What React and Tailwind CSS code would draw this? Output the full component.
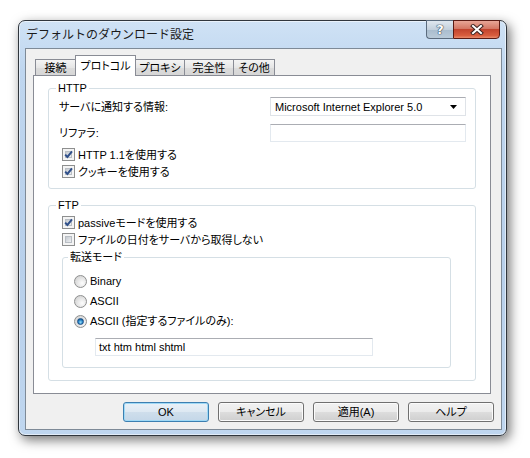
import React from "react";

const ui =
  "font-['Liberation_Sans','Noto_Sans_CJK_JP',sans-serif] [font-feature-settings:'palt'] text-[11px] text-black";

function Check({ checked }) {
  return (
    <span className="relative w-[13px] h-[13px] shrink-0 border border-[#8e8f8f] bg-[#f4f4f4]">
      <span className="absolute inset-[2px] border border-[#b9bec4] bg-[linear-gradient(135deg,#c4c9cf,#eef0f2)]" />
      {checked && (
        <svg className="absolute inset-0" width="11" height="11" viewBox="0 0 11 11">
          <path
            d="M2.2 5.6 L4.4 8 L9 2.4"
            stroke="#2f4f8a"
            strokeWidth="2"
            fill="none"
          />
        </svg>
      )}
    </span>
  );
}

function CheckRow({ checked, children, className = "" }) {
  return (
    <div className={`h-[17px] flex items-center pl-[13px] gap-[3px] ${className}`}>
      <Check checked={checked} />
      <span className="leading-[14px]">{children}</span>
    </div>
  );
}

function Radio({ checked }) {
  return (
    <span className="relative w-[13px] h-[13px] shrink-0 rounded-full border border-[#8e8f8f] bg-[radial-gradient(circle_at_65%_65%,#fdfdfd,#d4d4d4_80%)]">
      {checked && (
        <span className="absolute inset-[2px] rounded-full border border-[#1d4f86] bg-[radial-gradient(circle_at_50%_65%,#9be0fb,#1f7dc2_55%,#0b3d6e)]" />
      )}
    </span>
  );
}

function RadioRow({ checked, children }) {
  return (
    <div className="h-[20px] flex items-center pl-[11px] gap-[3px]">
      <Radio checked={checked} />
      <span className="leading-[14px]">{children}</span>
    </div>
  );
}

function Btn({ children, primary }) {
  return (
    <div
      className={
        primary
          ? "w-[86px] h-[20px] rounded-[3px] border border-[#3c7fb1] bg-[linear-gradient(#e9f1f8_0%,#dde8f2_50%,#cfdeec_50%,#c4d7e8_100%)] shadow-[inset_0_0_0_1px_#9fd9f6] flex items-center justify-center leading-[14px]"
          : "w-[86px] h-[20px] rounded-[3px] border border-[#707070] bg-[linear-gradient(#f2f2f2_0%,#ebebeb_50%,#dddddd_50%,#cfcfcf_100%)] shadow-[inset_0_0_0_1px_#fbfbfb] flex items-center justify-center leading-[14px]"
      }
    >
      {children}
    </div>
  );
}

function Tab({ children, active, width }) {
  if (active) {
    return (
      <div
        className={`${width} h-[21px] -mb-[1px] -ml-[1px] relative z-10 bg-white border border-b-0 border-[#898c95] flex items-start justify-center pt-[3px] leading-[14px]`}
      >
        {children}
      </div>
    );
  }
  return (
    <div
      className={`${width} h-[16px] -ml-[1px] first:ml-0 border border-b-0 border-[#898c95] bg-[linear-gradient(#f4f4f4,#e6e6e6_50%,#dcdcdc_51%,#d6d6d6)] flex items-center justify-center leading-[14px]`}
    >
      {children}
    </div>
  );
}

export default function App() {
  return (
    <div className={`w-[530px] h-[458px] bg-white pt-[20px] pl-[18px] ${ui}`}>
      {/* window frame */}
      <div className="w-[489px] h-[416px] rounded-[7px] border border-[#30363d] bg-[linear-gradient(180deg,#cfe2f5,#bfd6ef_12%,#b8d0eb_60%,#bfd6ef)] shadow-[3px_4px_12px_rgba(0,0,0,0.55),inset_0_0_0_1px_rgba(255,255,255,0.55)] flex flex-col">
        {/* title bar */}
        <div className="h-[27px] flex items-start justify-between">
          <div className="pl-[7px] pt-[6px] font-['Noto_Sans_CJK_JP',sans-serif] [font-feature-settings:normal] leading-[14px] text-[12px] text-[#1a1a1a]">
            デフォルトのダウンロード設定
          </div>
          <div className="flex -mt-[1px] mr-[6px]">
            <div className="w-[27px] h-[19px] rounded-bl-[4px] border border-[#5b6b7d] border-r-0 bg-[linear-gradient(#dfe7ef,#c3d0dc_50%,#a9bccd_51%,#b9cad9)] flex items-center justify-center">
              <span className="text-[13px] leading-none font-bold text-white [text-shadow:0_0_1px_#2c3e50,0_0_1px_#2c3e50,0_0_1px_#2c3e50] font-['DejaVu_Sans',sans-serif]">
                ?
              </span>
            </div>
            <div className="w-[47px] h-[19px] rounded-br-[4px] border border-[#5a1b14] bg-[linear-gradient(#e8a697,#d47764_45%,#c2442e_50%,#d85d3e_85%,#e98b6c)] flex items-center justify-center">
              <svg width="14" height="11" viewBox="0 0 14 11">
                <path d="M3 2 L11 9 M11 2 L3 9" stroke="#3d2320" strokeWidth="4" strokeLinecap="square" />
                <path d="M3 2 L11 9 M11 2 L3 9" stroke="#ffffff" strokeWidth="2" strokeLinecap="square" />
              </svg>
            </div>
          </div>
        </div>

        {/* client area */}
        <div className="ml-[6px] w-[477px] h-[382px] border border-[#7e8a97] bg-[#f0f0f0] pt-[6px] pl-[7px] pr-[10px] flex flex-col">
          {/* tabs */}
          <div className="h-[20px] flex items-end ml-[2px]">
            <Tab width="w-[41px]">接続</Tab>
            <Tab width="w-[61px]" active>
              プロトコル
            </Tab>
            <Tab width="w-[50px]">プロキシ</Tab>
            <Tab width="w-[50px]">完全性</Tab>
            <Tab width="w-[42px]">その他</Tab>
          </div>

          {/* tab panel */}
          <div className="h-[319px] w-[458px] border border-[#898c95] bg-white pl-[14px] flex flex-col">
            <fieldset className="mt-[5px] w-[428px] border border-[#d5dfe5] rounded-[3px] pb-[8px]">
              <legend className="ml-[7px] px-[2px] leading-[14px]">HTTP</legend>
              <div className="mt-[2px] h-[19px] flex items-center">
                <span className="pl-[10px] w-[221px] leading-[14px]">サーバに通知する情報:</span>
                <div className="w-[196px] h-[19px] border border-[#dfe3e8] border-t-[#abadb3] flex items-center justify-between pl-[4px] pr-[8px]">
                  <span className="leading-[14px]">Microsoft Internet Explorer 5.0</span>
                  <svg width="7" height="4" viewBox="0 0 7 4">
                    <path d="M0 0 H7 L3.5 4 Z" fill="#000" />
                  </svg>
                </div>
              </div>
              <div className="mt-[8px] h-[18px] flex items-center">
                <span className="pl-[10px] w-[221px] leading-[14px]">リファラ:</span>
                <div className="w-[196px] h-[18px] border border-[#e3e9ef] border-t-[#abadb3] bg-white" />
              </div>
              <CheckRow checked className="mt-[4px]">
                HTTP 1.1を使用する
              </CheckRow>
              <CheckRow checked>クッキーを使用する</CheckRow>
            </fieldset>

            <fieldset className="mt-[9px] w-[428px] border border-[#d5dfe5] rounded-[3px] pb-[12px]">
              <legend className="ml-[7px] px-[2px] leading-[14px]">FTP</legend>
              <CheckRow checked className="mt-[2px]">
                passiveモードを使用する
              </CheckRow>
              <CheckRow>ファイルの日付をサーバから取得しない</CheckRow>

              <fieldset className="mt-[2px] ml-[13px] w-[389px] border border-[#d5dfe5] rounded-[3px] pb-[11px]">
                <legend className="ml-[5px] px-[2px] leading-[14px]">転送モード</legend>
                <div className="mt-[7px]">
                  <RadioRow>Binary</RadioRow>
                  <RadioRow>ASCII</RadioRow>
                  <RadioRow checked>ASCII (指定するファイルのみ):</RadioRow>
                </div>
                <div className="mt-[7px] ml-[32px] w-[278px] h-[18px] border border-[#e3e9ef] border-t-[#abadb3] bg-white flex items-center pl-[3px]">
                  <span className="leading-[14px]">txt htm html shtml</span>
                </div>
              </fieldset>
            </fieldset>
          </div>

          {/* buttons */}
          <div className="mt-[8px] -mr-[3px] flex justify-end gap-[9px]">
            <Btn primary>OK</Btn>
            <Btn>キャンセル</Btn>
            <Btn>適用(A)</Btn>
            <Btn>ヘルプ</Btn>
          </div>
        </div>
      </div>
    </div>
  );
}
